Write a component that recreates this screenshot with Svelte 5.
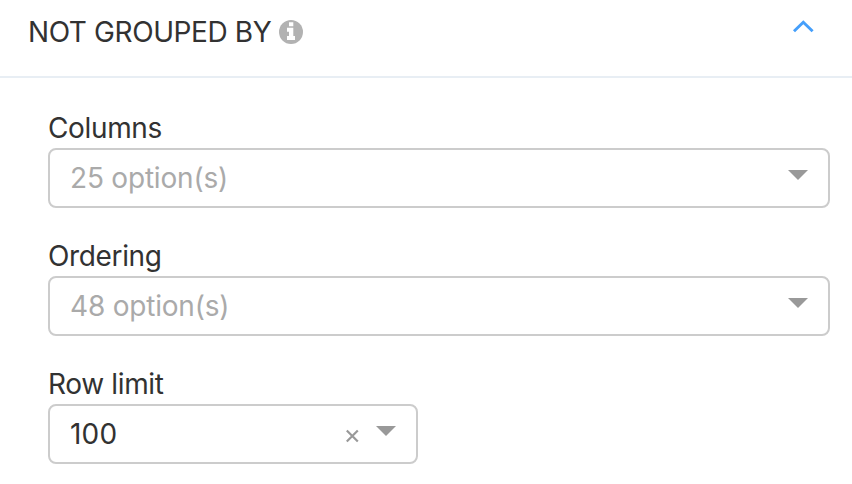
<script lang="ts">
  interface Field {
    label: string;
    text: string;
    filled?: boolean;
  }

  const fields: Field[] = [
    { label: 'Columns', text: '25 option(s)' },
    { label: 'Ordering', text: '48 option(s)' },
    { label: 'Row limit', text: '100', filled: true },
  ];
</script>

<section class="panel">
  <header>
    <span class="title">NOT GROUPED BY</span>
    <svg class="info" viewBox="0 0 24 24" width="24" height="24">
      <circle cx="12" cy="12" r="12" fill="#b2b2b2" />
      <path d="M10 2.3h4.3v4H10zM8 7.8h6.3V16H16v4H8v-4h2v-4.2H8z" fill="#fff" />
    </svg>
    <svg class="chevron" viewBox="0 0 22 13" width="22" height="13">
      <path d="M2 11.3 11.3 2.2l9.3 9.1" fill="none" stroke="#459ffb" stroke-width="2.9" />
    </svg>
  </header>

  <div class="body">
    {#each fields as field}
      <div class="field">
        <div class="label">{field.label}</div>
        <div class="select" class:filled={field.filled}>
          <span class="text">{field.text}</span>
          {#if field.filled}
            <svg class="clear" viewBox="0 0 14 14" width="14" height="14">
              <path d="M1.8 1.5l11 11M12.8 1.5l-11 11" stroke="#999" stroke-width="2.2" />
            </svg>
          {/if}
          <svg class="arrow" viewBox="0 0 20 10" width="20" height="10">
            <path d="M0 0h20L10 10z" fill="#999" />
          </svg>
        </div>
      </div>
    {/each}
  </div>
</section>

<style>
  :global(body) {
    background: #fff;
  }

  .panel {
    font-family: Inter, sans-serif;
    font-size: 28px;
    color: #323232;
    height: 484px;
    overflow: hidden;
  }

  header {
    display: flex;
    box-sizing: border-box;
    height: 78px;
    padding: 15px 38px 0 28px;
    border-bottom: 2px solid #e8eef4;
  }

  .title,
  .label {
    line-height: 34px;
    white-space: nowrap;
    letter-spacing: -0.4px;
  }

  .info {
    margin: 5px 0 0 8px;
  }

  .chevron {
    margin: 5px 0 0 auto;
  }

  .body {
    padding: 33px 22px 0 48px;
  }

  .field {
    margin-bottom: 31px;
  }

  .label {
    height: 37px;
    letter-spacing: -0.35px;
  }

  .select {
    display: flex;
    align-items: center;
    box-sizing: border-box;
    height: 60px;
    padding: 0 20px;
    border: 2px solid #ccc;
    border-radius: 8px;
    color: #aaa;
    letter-spacing: -0.2px;
  }

  .select.filled {
    width: 370px;
    color: #323232;
    letter-spacing: 0.2px;
  }

  .text {
    flex: 1;
    line-height: 34px;
  }

  .clear {
    margin: 3px 17px 0 0;
  }

  .arrow {
    margin-top: -6px;
  }
</style>
